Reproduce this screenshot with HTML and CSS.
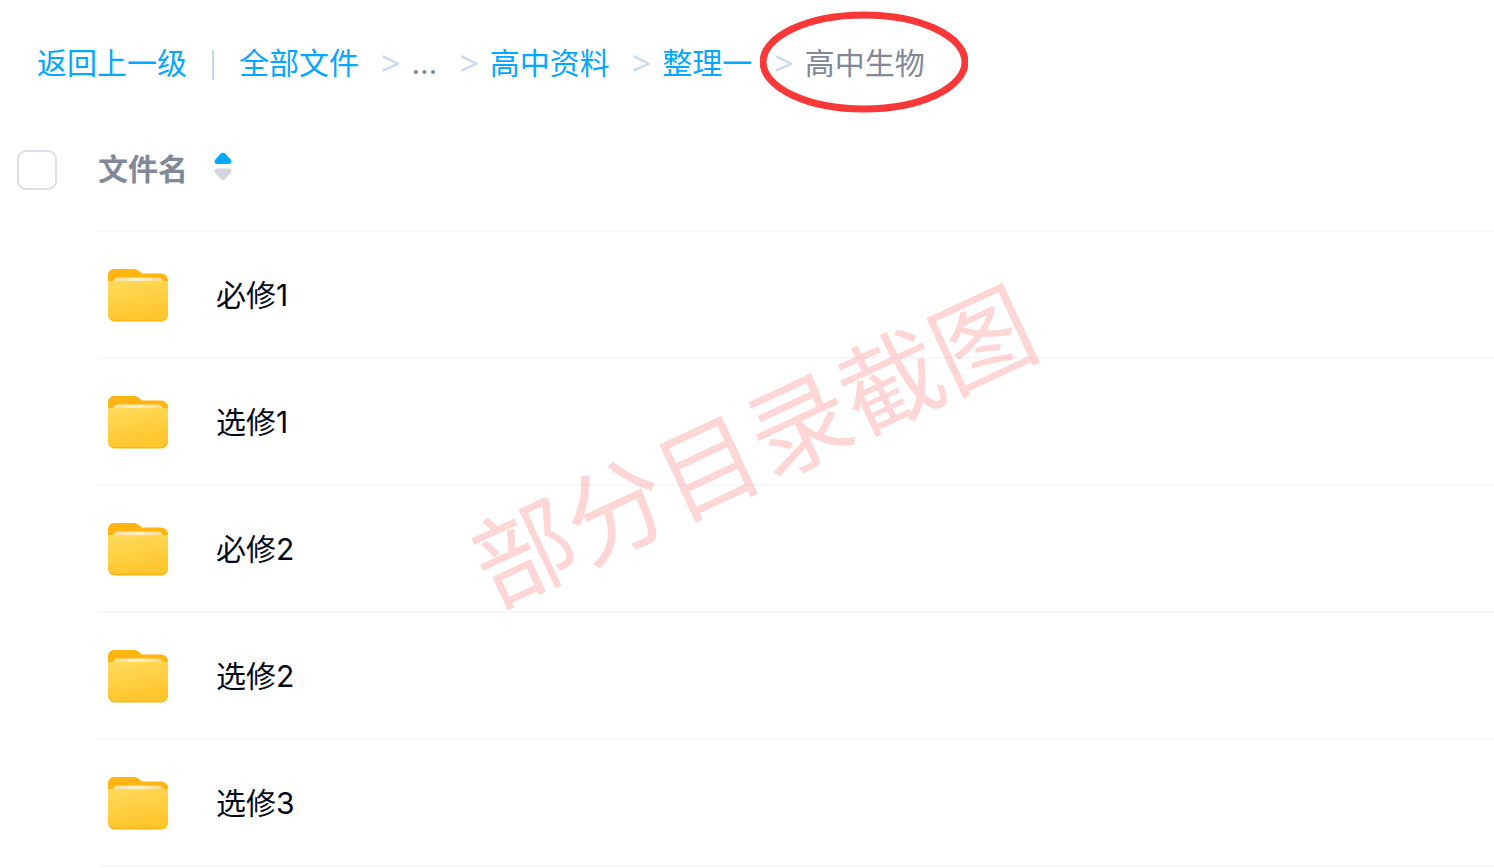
FILE: index.html
```
<!DOCTYPE html>
<html lang="zh-CN">

<head>
    <meta charset="utf-8">
    <meta name="viewport" content="width=device-width, initial-scale=1.0">
    <title>高中生物</title>
    <link rel="stylesheet" href="styles.css">
</head>

<body>
    <svg class="symbols" aria-hidden="true">
        <defs>
            <linearGradient id="front" x1="0" y1="0" x2="0.3" y2="1">
                <stop offset="0" stop-color="#ffdb5c" />
                <stop offset="1" stop-color="#ffc62e" />
            </linearGradient>
            <linearGradient id="paper" x1="0" y1="0" x2="1" y2="0">
                <stop offset="0" stop-color="#ffdf94" />
                <stop offset="0.5" stop-color="#fff1cf" />
                <stop offset="1" stop-color="#ffd87c" />
            </linearGradient>
            <symbol id="folder" viewBox="0 0 60 54">
                <path fill="#ffb40f" d="M0 7A6 6 0 0 1 6 1H26Q29 1 31 3L34 5.500H53A7 7 0 0 1 60 12.500V47A6.500 6.500 0 0 1 53.500 53.500H6.500A6.500 6.500 0 0 1 0 47Z" />
                <path fill="url(#paper)" d="M5 14Q6 9.500 9 9.500H51Q54 9.500 55 14Z" />
                <path fill="url(#front)" d="M0 13H60V45.500A6.500 6.500 0 0 1 53.500 52H6.500A6.500 6.500 0 0 1 0 45.500Z" />
            </symbol>
        </defs>
    </svg>

    <nav class="sti">
        <a class="tilbage" href="#">返回上一级</a>
        <span class="streg"></span>
        <a href="#">全部文件</a>
        <span class="pil">&gt;</span>
        <span>...</span>
        <span class="pil">&gt;</span>
        <a href="#">高中资料</a>
        <span class="pil">&gt;</span>
        <a href="#">整理一</a>
        <span class="pil">&gt;</span>
        <span class="valgt">高中生物
            <svg class="ring" viewBox="0 0 208 102" aria-hidden="true">
                <ellipse cx="104" cy="51" rx="101" ry="47" fill="none" stroke="#fb3737" stroke-width="7" />
            </svg>
        </span>
    </nav>

    <main class="liste">
        <table>
            <thead>
                <tr>
                    <td class="vaelg"><input type="checkbox" aria-label="全选"></td>
                    <th scope="col">
                        <button class="sorter" type="button">文件名
                            <svg width="18" height="34" viewBox="0 0 18 34" aria-hidden="true">
                                <path fill="#06a7ff" d="M6.500 1.800Q9 -0.500 11.500 1.800L17 8Q18.500 12 15 12H3Q-0.500 12 1 8Z" />
                                <path fill="#d4d7de" d="M3 16.500H15Q18.500 16.500 17 20.500L11.500 27Q9 29.500 6.500 27L1 20.500Q-0.500 16.500 3 16.500Z" />
                            </svg>
                        </button>
                    </th>
                </tr>
            </thead>
            <tbody>
                <tr>
                    <td></td>
                    <td class="navn"><a href="#"><svg class="mappe"><use href="#folder" /></svg>必修1</a></td>
                </tr>
                <tr>
                    <td></td>
                    <td class="navn"><a href="#"><svg class="mappe"><use href="#folder" /></svg>选修1</a></td>
                </tr>
                <tr>
                    <td></td>
                    <td class="navn"><a href="#"><svg class="mappe"><use href="#folder" /></svg>必修2</a></td>
                </tr>
                <tr>
                    <td></td>
                    <td class="navn"><a href="#"><svg class="mappe"><use href="#folder" /></svg>选修2</a></td>
                </tr>
                <tr>
                    <td></td>
                    <td class="navn"><a href="#"><svg class="mappe"><use href="#folder" /></svg>选修3</a></td>
                </tr>
            </tbody>
        </table>
        <div class="vandmaerke">部分目录截图</div>
    </main>
</body>

</html>
```

FILE: styles.css
```
* {
    box-sizing: border-box;
}

body {
    margin: 0;
    background: #fff;
    color: #03081a;
    font-family: Inter, "Noto Sans CJK SC", sans-serif;
    font-size: 30px;
    line-height: 44px;
}

a {
    color: inherit;
    text-decoration: none;
}

.symbols {
    position: absolute;
    width: 0;
    height: 0;
}

.sti {
    display: flex;
    align-items: center;
    height: 108px;
    padding: 18px 37px 0;
    color: #818999;
    white-space: nowrap;
}

.sti a {
    color: #06a7ff;
}

.streg {
    width: 2px;
    height: 30px;
    margin: 4px 25px 0;
    background: #c4d8f4;
}

.pil {
    margin: 0 11px 0 22px;
    color: #c4d8f4;
    font-family: "Open Sans", sans-serif;
    font-size: 34px;
}

.valgt {
    position: relative;
}

/* red ring round the open folder */
.ring {
    position: absolute;
    top: -30px;
    left: -45px;
    width: 208px;
    height: 102px;
}

.liste {
    position: relative;
}

table {
    width: 100%;
    border-collapse: collapse;
}

td,
th {
    padding: 0;
    text-align: left;
}

thead tr {
    height: 123px;
}

tbody tr {
    height: 127px;
}

.vaelg {
    width: 98px;
    padding-left: 17px;
}

.vaelg input {
    display: block;
    width: 40px;
    height: 40px;
    margin: 0;
    appearance: none;
    border: 2px solid #dddfe6;
    border-radius: 9px;
    background: #fff;
}

.vaelg input:checked {
    background: #06a7ff;
}

.sorter {
    display: flex;
    align-items: center;
    gap: 26px;
    padding: 0;
    border: 0;
    background: none;
    color: #818999;
    font: inherit;
    font-weight: 700;
    cursor: pointer;
}

.navn {
    border-top: 2px solid #f8f8fa;
    border-bottom: 2px solid #f8f8fa;
}

.navn a {
    display: flex;
    align-items: center;
    gap: 48px;
    padding-left: 10px;
}

.mappe {
    width: 60px;
    height: 54px;
}

.vandmaerke {
    position: absolute;
    top: 339px;
    left: 754px;
    color: #fb3737;
    font-size: 101px;
    line-height: 1;
    white-space: nowrap;
    opacity: .2;
    transform: translate(-50%, -50%) rotate(-25deg);
    pointer-events: none;
}
```
